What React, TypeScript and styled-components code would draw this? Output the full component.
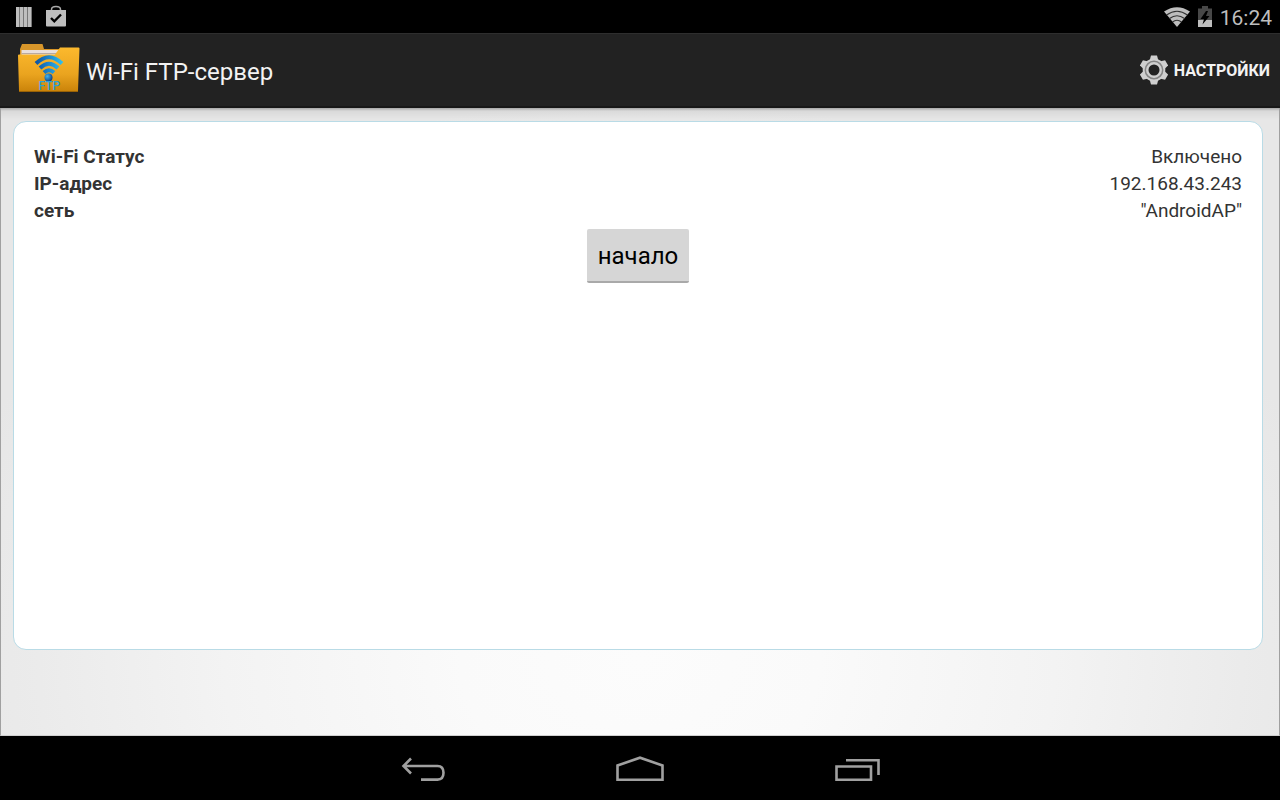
import React from "react";
import styled, { createGlobalStyle } from "styled-components";

const GlobalStyle = createGlobalStyle`
  *, *::before, *::after { box-sizing: border-box; }
  body { margin: 0; background: #000; font-family: Roboto, "Liberation Sans", sans-serif; }
  button { font: inherit; margin: 0; cursor: pointer; }
  svg { display: block; flex: none; }
`;

const Screen = styled.div`
  display: flex;
  flex-direction: column;
  min-height: 100vh;
`;

const StatusBar = styled.header`
  display: flex;
  justify-content: space-between;
  height: 33px;
  padding: 0 8px 0 15px;
  background: #000;
`;

const StatusGroup = styled.div<{ $gap: number }>`
  display: flex;
  align-items: center;
  gap: ${(p) => p.$gap}px;
`;

const Clock = styled.time`
  padding-top: 2px;
  color: #bebebe;
  font-size: 21px;
  line-height: 30px;
`;

const ActionBar = styled.div`
  display: flex;
  align-items: center;
  justify-content: space-between;
  height: 75px;
  padding: 0 10px 0 16px;
  background: #222;
  border-top: 1px solid #2e2e2e;
  border-bottom: 2px solid #181818;
`;

const Brand = styled.div`
  display: flex;
  align-items: center;
  gap: 6px;
`;

const Title = styled.h1`
  margin: 0;
  padding-top: 4px;
  color: #f3f3f3;
  font-size: 24px;
  line-height: 32px;
  font-weight: 400;
`;

const SettingsButton = styled.button`
  display: flex;
  align-items: center;
  gap: 6px;
  padding: 0;
  border: 0;
  background: none;
  color: #f3f3f3;
  && { font-size: 16px; font-weight: 700; }
`;

const Content = styled.main`
  display: flex;
  flex: 1;
  padding: 13px 16px 85px 12px;
  border: solid #a0a0a0;
  border-width: 0 1px 1px;
  border-bottom-color: #d0d0d0;
  background:
    linear-gradient(rgba(0, 0, 0, 0.28), rgba(0, 0, 0, 0.06) 3px, rgba(0, 0, 0, 0) 12px),
    radial-gradient(ellipse 56% 90% at 50% 88%, #fcfcfc 0%, #fafafa 25%, #f3f3f3 58%, #ebebeb 84%, #e7e7e7 100%);
`;

const Card = styled.section`
  display: flex;
  flex: 1;
  flex-direction: column;
  align-items: center;
  gap: 5px;
  padding: 21px 20px;
  border: 1px solid #b9dbe6;
  border-radius: 13px;
  background: #fff;
`;

const InfoList = styled.dl`
  width: 100%;
  margin: 0;
`;

const InfoRow = styled.div`
  display: flex;
  justify-content: space-between;
  color: #333;
  font-size: 19px;
  line-height: 27px;
`;

const Label = styled.dt`
  font-weight: 700;
`;

const Value = styled.dd`
  margin: 0;
`;

const StartButton = styled.button`
  height: 54px;
  padding: 2px 11px 0;
  border: 0;
  border-bottom: 2px solid #a9a9a9;
  border-radius: 2px;
  background: #d6d6d6;
  color: #000;
  && { font-size: 24px; }
`;

const NavBar = styled.nav`
  display: flex;
  align-items: center;
  justify-content: center;
  gap: 171px;
  height: 64px;
  padding: 2px 0 0 2px;
  background: #000;
`;

const NavButton = styled.button`
  padding: 0;
  border: 0;
  background: none;
`;

const BarsIcon = () => (
  <svg width="18" height="21" viewBox="0 0 18 21" aria-hidden="true">
    <path d="M1 1h16v20H1z" fill="#777" />
    <path d="M1 1h3v20H1zM5 1h3v20H5zM9 1h3v20H9zM13 1h3v20h-3z" fill="#bebebe" />
  </svg>
);

const BagIcon = () => (
  <svg width="22" height="24" viewBox="0 0 22 24" aria-hidden="true">
    <path d="M6.500 6V4.500Q6.500 1.500 11 1.500t4.500 3V6" fill="none" stroke="#a8a8a8" strokeWidth="1.500" />
    <path d="M1 5h20v15.500q0 1-1 1H2q-1 0-1-1z" fill="#bebebe" />
    <path d="M6 13l3.300 3.300L16 9.500" fill="none" stroke="#000" strokeWidth="2.400" />
  </svg>
);

const SignalIcon = () => (
  <svg width="26" height="20" viewBox="0 0 26 20" aria-hidden="true">
    <path d="M0 4.500Q13-4 26 4.500L13 20z" fill="#bebebe" />
    <path d="M2.500 8Q13 .5 23.500 8M5.500 11.500Q13 6 20.500 11.500M8.500 15Q13 11.500 17.500 15" fill="none" stroke="#333" strokeWidth="1.200" />
  </svg>
);

const BatteryIcon = () => (
  <svg width="14" height="21" viewBox="0 0 14 21" aria-hidden="true">
    <path d="M4 0h6v2.500h4V14H0V2.500h4z" fill="#484848" />
    <path d="M0 14h14v7H0z" fill="#bebebe" />
    <path d="M8 5L2.500 13H6l-1.500 5.500L11.500 10H8L10 5z" fill="#000" />
  </svg>
);

const FolderIcon = () => (
  <svg width="64" height="54" viewBox="0 0 64 54" aria-hidden="true">
    <defs>
      <linearGradient id="folder" x1="0" y1="0" x2="0" y2="1">
        <stop offset="0" stopColor="#fcb92d" />
        <stop offset="0.600" stopColor="#eaa41f" />
        <stop offset="1" stopColor="#c98209" />
      </linearGradient>
      <linearGradient id="wave" x1="18" y1="0" x2="48" y2="0" gradientUnits="userSpaceOnUse">
        <stop offset="0" stopColor="#0b4d9c" />
        <stop offset="0.500" stopColor="#1d87cf" />
        <stop offset="1" stopColor="#35c6ef" />
      </linearGradient>
      <radialGradient id="dot" cx="0.350" cy="0.350" r="0.700">
        <stop offset="0" stopColor="#45b5ee" />
        <stop offset="1" stopColor="#0a3e85" />
      </radialGradient>
    </defs>
    <path d="M4 14V6l2-5h20.500l1.500 5h15v8z" fill="#d8962a" />
    <path d="M5.500 7H43l-3 6H5.500z" fill="#e9dfdc" />
    <path d="M5.500 10h36v1h-36z" fill="#b9a9a0" />
    <path d="M2 12.500q0-1 1-1h36l5-7h18.500q1 0 1 1L62 47.500q0 1.500-1.500 1.500h-56Q3 49 3 47.500z" fill="url(#folder)" />
    <path d="M3 48.500h59" stroke="#9a6206" fill="none" />
    <g fill="none" stroke="url(#wave)" strokeWidth="4">
      <path d="M20 20.500Q33 8 46 20.500" />
      <path d="M24 25Q33 16.500 42 25" />
      <path d="M28 29.500Q33 25 38 29.500" />
    </g>
    <circle cx="32.500" cy="34.500" r="4" fill="url(#dot)" />
    <text x="22.500" y="47" fill="#2aa0d8" fontFamily="Roboto, sans-serif" fontSize="12" fontWeight="500">FTP</text>
  </svg>
);

const teeth = [0, 60, 120, 180, 240, 300];

const GearIcon = () => (
  <svg width="28" height="30" viewBox="-14 -15 28 30" aria-hidden="true">
    <g fill="#cfcfcf">
      <circle r="11.300" />
      {teeth.map((angle) => (
        <path key={angle} d="M-4.500-9L-3-14.500H3L4.500-9z" transform={`rotate(${angle})`} />
      ))}
    </g>
    <circle r="8.700" fill="none" stroke="#858585" strokeWidth="1.500" />
    <circle r="5.500" fill="#222" />
  </svg>
);

const BackIcon = () => (
  <svg width="44" height="26" viewBox="0 0 44 26" fill="none" stroke="#a0a0a0" strokeWidth="2.600" aria-hidden="true">
    <path d="M2 10h34.500q6 0 6 6.800t-6 6.800H20M10 2.500L2.500 10 10 17.500" />
  </svg>
);

const HomeIcon = () => (
  <svg width="48" height="26" viewBox="0 0 48 26" fill="none" stroke="#a0a0a0" strokeWidth="2.600" aria-hidden="true">
    <path d="M1.500 23.700V9.500L24 1.700 46.500 9.500v14.200z" />
  </svg>
);

const RecentIcon = () => (
  <svg width="46" height="26" viewBox="0 0 46 26" fill="none" stroke="#a0a0a0" strokeWidth="2.600" aria-hidden="true">
    <path d="M1.500 10.500h34.500v13.200H1.500zM11 4.200h32.500V19" />
  </svg>
);

const details = [
  { label: "Wi-Fi Статус", value: "Включено" },
  { label: "IP-адрес", value: "192.168.43.243" },
  { label: "сеть", value: '"AndroidAP"' },
];

export default function App() {
  return (
    <>
      <GlobalStyle />
      <Screen>
        <StatusBar>
          <StatusGroup $gap={12}>
            <BarsIcon />
            <BagIcon />
          </StatusGroup>
          <StatusGroup $gap={8}>
            <SignalIcon />
            <BatteryIcon />
            <Clock>16:24</Clock>
          </StatusGroup>
        </StatusBar>
        <ActionBar>
          <Brand>
            <FolderIcon />
            <Title>Wi-Fi FTP-сервер</Title>
          </Brand>
          <SettingsButton type="button">
            <GearIcon />
            НАСТРОЙКИ
          </SettingsButton>
        </ActionBar>
        <Content>
          <Card>
            <InfoList>
              {details.map((item) => (
                <InfoRow key={item.label}>
                  <Label>{item.label}</Label>
                  <Value>{item.value}</Value>
                </InfoRow>
              ))}
            </InfoList>
            <StartButton type="button">начало</StartButton>
          </Card>
        </Content>
        <NavBar>
          <NavButton type="button" aria-label="Назад"><BackIcon /></NavButton>
          <NavButton type="button" aria-label="Домой"><HomeIcon /></NavButton>
          <NavButton type="button" aria-label="Недавние"><RecentIcon /></NavButton>
        </NavBar>
      </Screen>
    </>
  );
}
